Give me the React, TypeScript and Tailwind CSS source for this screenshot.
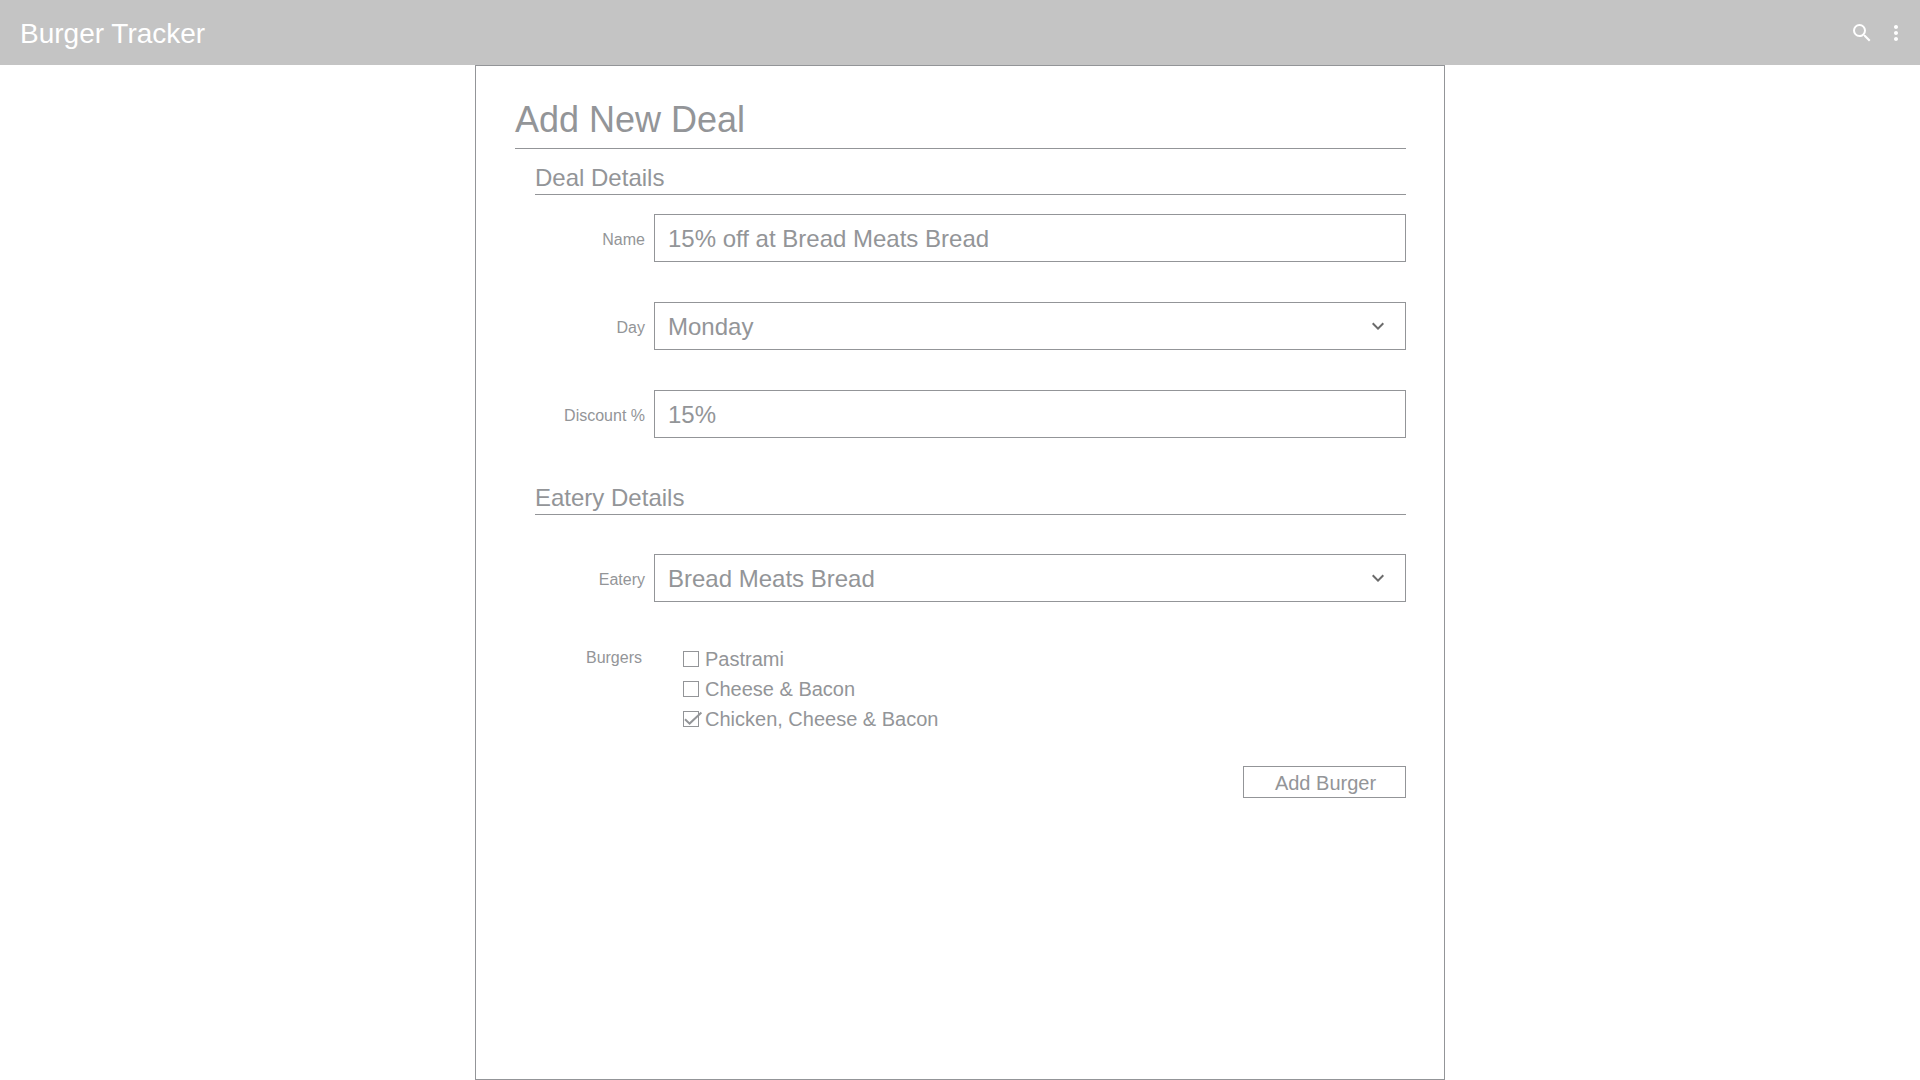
import { useState, type ReactNode } from 'react';
import { MdExpandMore, MdMoreVert, MdSearch } from 'react-icons/md';

const DAYS = ['Monday', 'Tuesday', 'Wednesday', 'Thursday', 'Friday', 'Saturday', 'Sunday'];
const EATERIES = ['Bread Meats Bread'];
const BURGERS = ['Pastrami', 'Cheese & Bacon', 'Chicken, Cheese & Bacon'];

const controlClass =
  'h-12 w-full appearance-none rounded-none border border-[#939598] bg-white pl-[13px] pr-12 pt-0.5 text-2xl text-[#939598] outline-none focus:border-[#606060]';

function Header() {
  return (
    <header className="flex h-[65px] items-center justify-between bg-[#c4c4c4] pl-5 pr-3 text-white">
      <span className="pt-0.5 text-[28px] leading-8">Burger Tracker</span>
      <div className="flex items-center gap-2.5">
        <button type="button" aria-label="Search">
          <MdSearch size={24} />
        </button>
        <button type="button" aria-label="More options">
          <MdMoreVert size={24} />
        </button>
      </div>
    </header>
  );
}

function SectionTitle({ children }: { children: ReactNode }) {
  return <h2 className="border-b border-[#939598] text-2xl leading-8">{children}</h2>;
}

function Field({ id, label, children }: { id: string; label: string; children: ReactNode }) {
  return (
    <div className="flex items-center">
      <label htmlFor={id} className="w-[119px] shrink-0 pr-[9px] pt-1 text-right text-base">
        {label}
      </label>
      <div className="grow">{children}</div>
    </div>
  );
}

function Select({ id, options }: { id: string; options: string[] }) {
  return (
    <div className="relative">
      <select id={id} className={controlClass}>
        {options.map((option) => (
          <option key={option}>{option}</option>
        ))}
      </select>
      <MdExpandMore size={24} className="pointer-events-none absolute right-4 top-3 text-[#6b6b6b]" />
    </div>
  );
}

function BurgerOption({ name, initial }: { name: string; initial: boolean }) {
  const [checked, setChecked] = useState(initial);
  return (
    <label className="flex items-center gap-1.5 text-xl leading-[30px]">
      <span className="relative size-4">
        <input
          type="checkbox"
          checked={checked}
          onChange={(event) => setChecked(event.target.checked)}
          className="block size-4 appearance-none border border-[#939598] bg-white"
        />
        {checked && (
          <svg
            viewBox="0 0 20 16"
            className="pointer-events-none absolute left-0 top-0 h-4 w-5"
            fill="none"
            stroke="#939598"
            strokeWidth="2"
          >
            <path d="M2 8.2 6.6 12.6 18.4 1.4" />
          </svg>
        )}
      </span>
      {name}
    </label>
  );
}

export default function App() {
  return (
    <div className="flex min-h-screen flex-col bg-white font-['Liberation_Sans',Arial,sans-serif] text-[#939598]">
      <Header />
      <main className="mx-auto w-full max-w-[970px] grow border border-[#939598] pb-8 pl-[39px] pr-[38px] pt-[34px]">
        <h1 className="border-b border-[#939598] pb-2 text-4xl leading-10">Add New Deal</h1>
        <form className="ml-5 mt-[13px]" onSubmit={(event) => event.preventDefault()}>
          <SectionTitle>Deal Details</SectionTitle>
          <div className="mt-[19px] flex flex-col gap-10">
            <Field id="name" label="Name">
              <input id="name" type="text" defaultValue="15% off at Bread Meats Bread" className={controlClass} />
            </Field>
            <Field id="day" label="Day">
              <Select id="day" options={DAYS} />
            </Field>
            <Field id="discount" label="Discount %">
              <input id="discount" type="text" defaultValue="15%" className={controlClass} />
            </Field>
          </div>

          <div className="mt-11">
            <SectionTitle>Eatery Details</SectionTitle>
          </div>
          <div className="mt-[39px]">
            <Field id="eatery" label="Eatery">
              <Select id="eatery" options={EATERIES} />
            </Field>
          </div>
          <div role="group" aria-labelledby="burgers" className="mt-[42px] flex">
            <span id="burgers" className="w-[119px] shrink-0 pr-3 text-right text-base leading-7">
              Burgers
            </span>
            <div className="ml-[29px] flex flex-col">
              {BURGERS.map((name, index) => (
                <BurgerOption key={name} name={name} initial={index === 2} />
              ))}
            </div>
          </div>
          <div className="mt-8 flex justify-end">
            <button type="submit" className="h-8 w-[163px] border border-[#939598] pl-0.5 pt-0.5 text-xl leading-7">
              Add Burger
            </button>
          </div>
        </form>
      </main>
    </div>
  );
}
